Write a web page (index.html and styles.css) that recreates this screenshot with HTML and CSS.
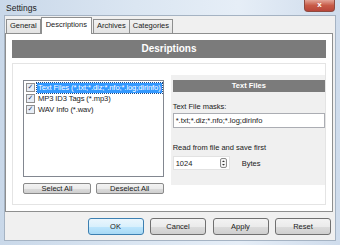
FILE: index.html
```html
<!DOCTYPE html>
<html lang="en">
<head>
    <meta charset="UTF-8">
    <title>Settings</title>
    <link rel="stylesheet" href="styles.css">
</head>
<body>
    <div class="window">
        <div class="titlebar">
            <span class="title">Settings</span>
            <span class="close-btn">x</span>
        </div>
        <div class="client">
            <div class="tabs">
                <div class="tab">General</div>
                <div class="tab active">Descriptions</div>
                <div class="tab">Archives</div>
                <div class="tab">Categories</div>
            </div>
            <div class="tab-page">
                <div class="page-header">Desriptions</div>
                <div class="group">
                    <div class="left-col">
                        <div class="listbox">
                            <div class="list-item selected"><span class="check">&#10003;</span><span class="item-text">Text Files (*.txt;*.diz;*.nfo;*.log;dirinfo)</span></div>
                            <div class="list-item"><span class="check">&#10003;</span><span class="item-text">MP3 ID3 Tags (*.mp3)</span></div>
                            <div class="list-item"><span class="check">&#10003;</span><span class="item-text">WAV Info (*.wav)</span></div>
                        </div>
                        <div class="list-buttons">
                            <button class="btn">Select All</button>
                            <button class="btn">Deselect All</button>
                        </div>
                    </div>
                    <div class="right-col">
                        <div class="panel-header">Text Files</div>
                        <div class="field-label">Text File masks:</div>
                        <div class="textbox">*.txt;*.diz;*.nfo;*.log;dirinfo</div>
                        <div class="field-label read-label">Read from file and save first</div>
                        <div class="spin-row">
                            <div class="spinbox">
                                <span>1024</span>
                                <span class="spin-arrows">
                                    <svg width="7" height="10" viewBox="0 0 7 10">
                                        <rect x="0.5" y="0.5" width="6" height="9" rx="1.5" fill="#f4f4f4" stroke="#8a8a8a"/>
                                        <path d="M2 4 L3.5 2.5 L5 4 Z M2 6 L3.5 7.5 L5 6 Z" fill="#333"/>
                                    </svg>
                                </span>
                            </div>
                            <span class="unit">Bytes</span>
                        </div>
                    </div>
                </div>
            </div>
            <div class="footer">
                <button class="btn dlg-btn default">OK</button>
                <button class="btn dlg-btn">Cancel</button>
                <button class="btn dlg-btn">Apply</button>
                <button class="btn dlg-btn">Reset</button>
            </div>
        </div>
    </div>
</body>
</html>
```
FILE: styles.css
```css
body {
    margin: 0;
    font-family: "Liberation Sans", Arial, sans-serif;
    font-size: 7.5px;
    color: #1a1a1a;
}

.window {
    width: 340px;
    height: 245px;
    background: linear-gradient(to right, #c9d8e9, #dbe6f2 40%, #e6eef7 70%, #cfdcec);
    display: flex;
    flex-direction: column;
    overflow: hidden;
}

.titlebar {
    height: 15px;
    display: flex;
    align-items: flex-start;
    padding-left: 6px;
}

.title {
    font-size: 8.5px;
    margin-top: 3px;
    color: #222;
}

.close-btn {
    margin-left: auto;
    margin-right: 5px;
    width: 29px;
    height: 11px;
    background: linear-gradient(#e3a497, #c75a47 50%, #b8463a);
    border: 1px solid #8d4a40;
    border-top: none;
    border-radius: 0 0 4px 4px;
    color: #fff;
    font-weight: bold;
    font-size: 8px;
    text-align: center;
    line-height: 9px;
}

.client {
    flex: 1;
    margin: 0 4px 4px 4px;
    background: #f0f0f0;
    border: 1px solid #a5b3c3;
    display: flex;
    flex-direction: column;
}

.tabs {
    display: flex;
    padding: 2px 0 0 1px;
    height: 15px;
    align-items: flex-end;
}

.tab {
    height: 13px;
    padding: 0 3px;
    line-height: 12px;
    border: 1px solid #8e8f8f;
    border-bottom: none;
    background: linear-gradient(#f2f2f2, #e3e3e3);
    margin-right: -1px;
}

.tab.active {
    height: 16px;
    background: #fff;
    line-height: 13px;
    margin: 0 1px -1px 1px;
    padding: 0 4px;
    position: relative;
    z-index: 1;
}

.tab-page {
    margin: 0 2px 0 0;
    background: #fff;
    border: 1px solid #8e8f8f;
    padding: 6px;
    height: 179px;
    box-sizing: border-box;
}

.page-header {
    height: 18px;
    background: #7b7b7b;
    color: #fff;
    font-weight: bold;
    font-size: 10px;
    text-align: center;
    line-height: 18px;
}

.group {
    margin-top: 5px;
    border: 1px solid #e4e4e4;
    height: 142px;
    box-sizing: border-box;
    display: flex;
    padding: 16px 0 0 10px;
}

.left-col {
    width: 142px;
    display: flex;
    flex-direction: column;
}

.listbox {
    height: 97px;
    box-sizing: border-box;
    border: 1px solid #828790;
    background: #fff;
    padding: 1px;
    overflow: hidden;
}

.list-item {
    display: flex;
    align-items: center;
    height: 11px;
    white-space: nowrap;
    font-size: 7.6px;
    letter-spacing: -0.1px;
}

.check {
    flex: none;
    width: 7px;
    height: 7px;
    border: 1px solid #8f8f8f;
    background: #e8eef6;
    font-size: 7px;
    line-height: 7px;
    text-align: center;
    color: #2a3c6e;
    margin: 0 2px 0 1px;
    letter-spacing: 0;
    font-family: "DejaVu Sans", sans-serif;
}

.item-text {
    padding: 0 1px;
    line-height: 10px;
}

.list-item.selected .item-text {
    background: #3399ff;
    color: #fff;
    outline: 1px dotted #1a4a8a;
}

.list-buttons {
    display: flex;
    justify-content: space-between;
    margin-top: 6px;
}

.btn {
    font-family: "Liberation Sans", Arial, sans-serif;
    font-size: 7.5px;
    color: #1a1a1a;
    height: 11px;
    width: 68px;
    padding: 0;
    border: 1px solid #8a8a8a;
    border-radius: 2px;
    background: linear-gradient(#f3f3f3, #ebebeb 50%, #dcdcdc 51%, #cfcfcf);
}

.right-col {
    margin: -5px 0 0 7px;
    width: 158px;
    background: #f0f0f0;
    padding: 5px 0 0 2px;
    box-sizing: border-box;
    height: 110px;
}

.panel-header {
    height: 12px;
    background: #7b7b7b;
    color: #fff;
    font-weight: bold;
    font-size: 7.5px;
    text-align: center;
    line-height: 12px;
}

.field-label {
    margin-top: 10px;
}

.read-label {
    margin-top: 15px;
}

.textbox {
    margin-top: 2px;
    height: 15px;
    line-height: 14px;
    padding-left: 2px;
    background: #fff;
    border: 1px solid #abadb3;
    box-sizing: border-box;
}

.spin-row {
    display: flex;
    align-items: center;
    margin-top: 4px;
}

.spinbox {
    width: 57px;
    height: 14px;
    background: #fff;
    border: 1px solid #e2e2e2;
    box-sizing: border-box;
    display: flex;
    align-items: center;
    justify-content: space-between;
    padding: 0 2px;
}

.spin-arrows {
    display: flex;
}

.unit {
    margin-left: 12px;
}

.footer {
    flex: 1;
    display: flex;
    justify-content: flex-end;
    align-items: center;
    gap: 6.5px;
    padding-right: 4px;
}

.dlg-btn {
    width: 56px;
    height: 17px;
    border-radius: 3px;
    border-color: #707070;
}

.dlg-btn.default {
    border-color: #3c7fb1;
    background: linear-gradient(#eaf6fd, #d9f0fc 50%, #bee6fd 51%, #a7d9f5);
}
```
